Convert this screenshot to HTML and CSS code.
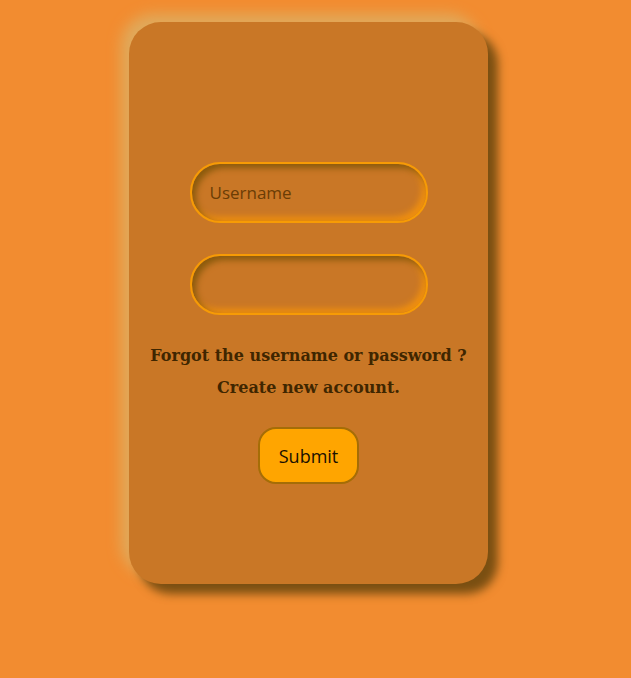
FILE: index.html
```html
<!DOCTYPE html>
<html>
<head>
<meta charset="utf-8">
<link rel="stylesheet" href="styles.css">
</head>
<body>
<div class="card">
  <input class="field" type="text" placeholder="Username">
  <input class="field second" type="password">
  <p class="link first">Forgot the username or password ?</p>
  <p class="link">Create new account.</p>
  <button class="submit">Submit</button>
</div>
</body>
</html>
```
FILE: styles.css
```css
html, body {
  margin: 0;
  padding: 0;
  background: #f28c30;
  height: 100%;
}
body {
  padding-top: 22px;
  padding-left: 129px;
  box-sizing: border-box;
}
.card {
  width: 359px;
  height: 562px;
  background: #c97726;
  border-radius: 32px;
  box-shadow: 10px 10px 10px #7a4f12, -8px -8px 14px #e0aa5c;
  display: flex;
  flex-direction: column;
  align-items: center;
  padding-top: 140px;
  box-sizing: border-box;
}
.field {
  width: 238px;
  height: 61px;
  box-sizing: border-box;
  border: 2px solid #f79b05;
  border-radius: 30px;
  background: transparent;
  box-shadow: inset 4px 4px 6px #8a5a0c, inset -4px -4px 6px #f0900f;
  padding: 0 18px;
  font-family: "Open Sans", sans-serif;
  font-size: 17px;
  color: #5a3300;
  outline: none;
}
.field::placeholder {
  color: #6b3d05;
}
.second {
  margin-top: 31px;
}
.link {
  margin: 0;
  font-family: "DejaVu Serif", serif;
  font-weight: bold;
  font-size: 16px;
  color: #3f2600;
  line-height: 32px;
}
.link.first {
  margin-top: 25px;
}
.submit {
  margin-top: 23px;
  width: 101px;
  height: 57px;
  border-radius: 18px;
  border: 2px solid #a56d06;
  background: #ffa500;
  font-family: "Open Sans", sans-serif;
  font-size: 18px;
  color: #1a1000;
  padding: 0;
}
```
